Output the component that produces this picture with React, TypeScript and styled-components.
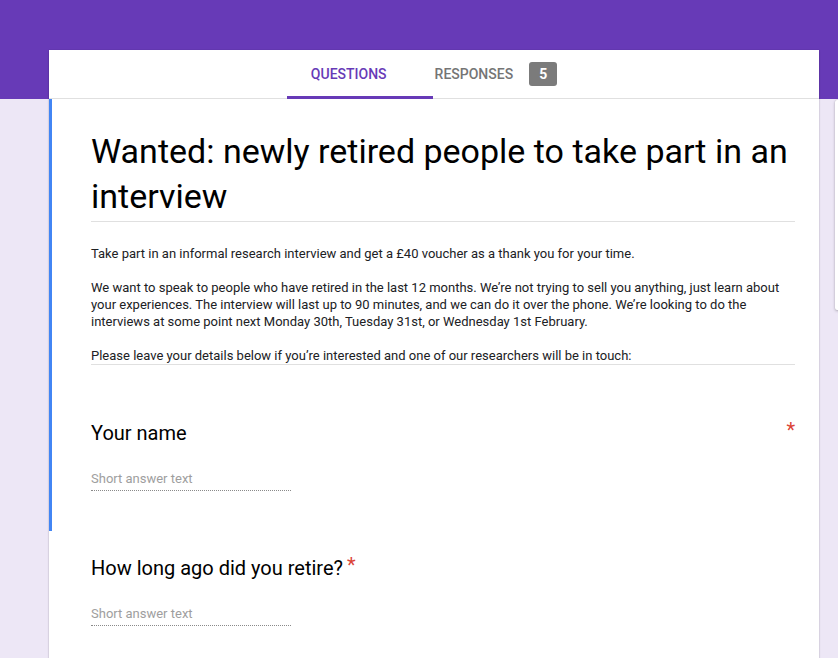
import React from "react";
import styled, { createGlobalStyle } from "styled-components";

const Global = createGlobalStyle`
  html, body {
    margin: 0;
    padding: 0;
    overflow: hidden;
  }
  body {
    font-family: Roboto, "Liberation Sans", Arial, sans-serif;
    background: linear-gradient(#673ab7 0, #673ab7 99px, #ede7f6 99px);
    min-height: 658px;
  }
`;

const Page = styled.div`
  display: flex;
  align-items: flex-start;
  gap: 16px;
  padding: 50px 0 0 49px;
  height: 608px;
  overflow: hidden;
`;

const Card = styled.main`
  flex: 0 0 770px;
  background: #fff;
  box-shadow: 0 1px 2px rgba(0, 0, 0, 0.2), 0 0 1px rgba(0, 0, 0, 0.15);
  min-height: 700px;
`;

const SideBar = styled.aside`
  flex: 0 0 48px;
  height: 210px;
  margin-top: 50px;
  background: #fff;
  border-radius: 2px;
  box-shadow: 0 1px 3px rgba(0, 0, 0, 0.25), 0 0 1px rgba(0, 0, 0, 0.2);
`;

const TabBar = styled.nav`
  display: flex;
  justify-content: center;
  height: 48px;
  border-bottom: 1px solid #e0e0e0;
`;

const Tab = styled.div<{ $active?: boolean }>`
  position: relative;
  display: flex;
  align-items: center;
  gap: 16px;
  padding: 0 24px;
  font-size: 14px;
  font-weight: 500;
  text-transform: uppercase;
  color: ${(p) => (p.$active ? "#673ab7" : "#757575")};
  cursor: pointer;
  ${(p) =>
    p.$active &&
    `
    &::after {
      content: "";
      position: absolute;
      left: 0;
      bottom: -1px;
      width: 146px;
      height: 3px;
      background: #673ab7;
    }
  `}
`;

const Badge = styled.span`
  display: inline-flex;
  align-items: center;
  justify-content: center;
  width: 28px;
  height: 24px;
  border-radius: 3px;
  background: #7b7b7b;
  color: #fff;
  font-size: 14px;
  font-weight: 700;
`;

const Section = styled.section<{ $active?: boolean; $top: number; $bottom: number }>`
  border-left: 3px solid ${(p) => (p.$active ? "#4285f4" : "transparent")};
  padding: ${(p) => p.$top}px 24px ${(p) => p.$bottom}px 39px;
`;

const Title = styled.h1`
  margin: 0;
  padding-bottom: 2px;
  font-size: 34px;
  line-height: 45px;
  font-weight: 400;
  color: #000;
  border-bottom: 1px solid #e0e0e0;
`;

const Description = styled.div`
  margin-top: 23px;
  border-bottom: 1px solid #e0e0e0;
  font-size: 13px;
  line-height: 17px;
  color: #202124;

  p {
    margin: 0;
  }
  p + p {
    margin-top: 17px;
  }
`;

const QuestionRow = styled.div`
  display: flex;
  align-items: flex-start;
  gap: 4px;
`;

const QuestionTitle = styled.h2`
  margin: 0;
  font-size: 20px;
  line-height: 28px;
  font-weight: 400;
  color: #000;
`;

const Star = styled.span<{ $end?: boolean }>`
  margin-left: ${(p) => (p.$end ? "auto" : "0")};
  font-size: 20px;
  line-height: 22px;
  color: #db4437;
`;

const ShortAnswer = styled.div`
  width: 200px;
  margin-top: 23px;
  padding-bottom: 3px;
  border-bottom: 1px dotted #8a8a8a;
  font-size: 13px;
  line-height: 17px;
  color: #9e9e9e;
`;

type Q = { title: string; starAtEnd?: boolean };

const Question = ({ q, active }: { q: Q; active?: boolean }) => (
  <Section $active={active} $top={23} $bottom={40}>
    <QuestionRow>
      <QuestionTitle>{q.title}</QuestionTitle>
      <Star $end={q.starAtEnd}>*</Star>
    </QuestionRow>
    <ShortAnswer>Short answer text</ShortAnswer>
  </Section>
);

export default function App() {
  return (
    <>
      <Global />
      <Page>
        <Card>
          <TabBar>
            <Tab $active>Questions</Tab>
            <Tab>
              Responses <Badge>5</Badge>
            </Tab>
          </TabBar>
          <Section $active $top={30} $bottom={31}>
            <Title>Wanted: newly retired people to take part in an interview</Title>
            <Description>
              <p>
                Take part in an informal research interview and get a £40 voucher as a thank you for your time.
              </p>
              <p>
                We want to speak to people who have retired in the last 12 months. We’re not trying to sell you
                anything, just learn about your experiences. The interview will last up to 90 minutes, and we can
                do it over the phone. We’re looking to do the interviews at some point next Monday 30th, Tuesday
                31st, or Wednesday 1st February.
              </p>
              <p>
                Please leave your details below if you’re interested and one of our researchers will be in touch:
              </p>
            </Description>
          </Section>
          <Question active q={{ title: "Your name", starAtEnd: true }} />
          <Question q={{ title: "How long ago did you retire?" }} />
        </Card>
        <SideBar />
      </Page>
    </>
  );
}
